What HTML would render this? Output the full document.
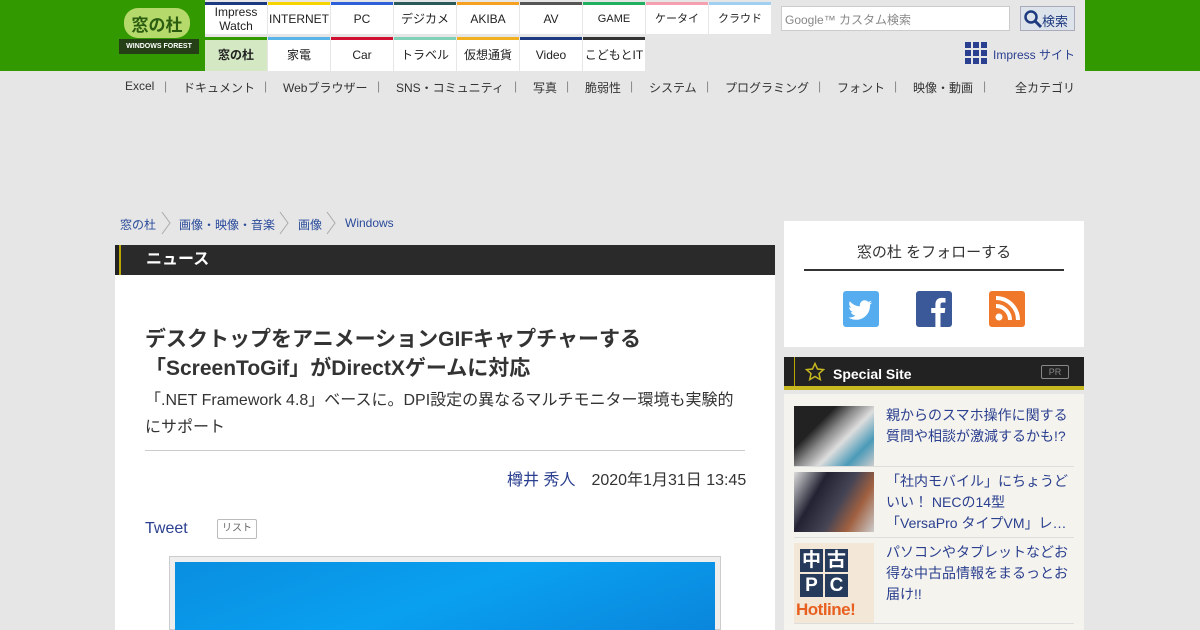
<!DOCTYPE html>
<html><head><meta charset="utf-8"><style>
*{margin:0;padding:0;box-sizing:border-box}
body{width:1200px;height:630px;overflow:hidden;background:#e6e6e6;font-family:"Liberation Sans","Noto Sans CJK JP",sans-serif;color:#333;position:relative}
.a{position:absolute}
.green{background:#339900}
.tile{position:absolute;width:62px;height:33px;background:#fff;font-size:12px;color:#222;text-align:center;display:flex;align-items:center;justify-content:center;line-height:1.1}
.cat{position:absolute;top:79px;font-size:12px;color:#333;white-space:nowrap}
.p{position:absolute;top:79px;font-size:12px;color:#888}
.bc{font-size:12px;color:#2a4b9b;position:absolute;top:216px}
.chev{position:absolute;top:211px}
</style></head><body>
<div class="a green" style="left:0;top:0;width:205px;height:71px"></div>
<div class="a green" style="left:1085px;top:0;width:115px;height:71px"></div>
<div class="a" style="left:205px;top:0;width:880px;height:71px;background:#e6e6e6"></div>
<div class="a" style="left:124px;top:8px;width:66px;height:30px;background:#b5d96a;border-radius:14px"></div>
<div class="a" style="left:124px;top:11px;width:66px;text-align:center;font-size:17px;font-weight:bold;color:#2a5d10">窓の杜</div>
<div class="a" style="left:119px;top:39px;width:80px;height:15px;background:#254016;color:#fff;font-size:7px;font-weight:bold;text-align:center;line-height:15px">WINDOWS FOREST</div>
<div class="tile" style="left:205px;top:2px;border-top:3px solid #1d3a80;height:32px">Impress<br>Watch</div>
<div class="tile" style="left:268px;top:2px;border-top:3px solid #f5d400;height:32px">INTERNET</div>
<div class="tile" style="left:331px;top:2px;border-top:3px solid #2f5fd8;height:32px">PC</div>
<div class="tile" style="left:394px;top:2px;border-top:3px solid #2a5a5a;height:32px">デジカメ</div>
<div class="tile" style="left:457px;top:2px;border-top:3px solid #f5a020;height:32px">AKIBA</div>
<div class="tile" style="left:520px;top:2px;border-top:3px solid #555;height:32px">AV</div>
<div class="tile" style="left:583px;top:2px;border-top:3px solid #20b060;height:32px;font-size:11px">GAME</div>
<div class="tile" style="left:646px;top:2px;border-top:3px solid #f5a0b0;height:32px;font-size:11px">ケータイ</div>
<div class="tile" style="left:709px;top:2px;border-top:3px solid #a0d0f0;height:32px;font-size:11px">クラウド</div>
<div class="tile" style="left:205px;top:37px;border-top:3px solid #339900;height:34px;background:#d4e8c4;font-weight:bold">窓の杜</div>
<div class="tile" style="left:268px;top:37px;border-top:3px solid #5ab4e8;height:34px">家電</div>
<div class="tile" style="left:331px;top:37px;border-top:3px solid #d01030;height:34px">Car</div>
<div class="tile" style="left:394px;top:37px;border-top:3px solid #80d0b8;height:34px">トラベル</div>
<div class="tile" style="left:457px;top:37px;border-top:3px solid #f0b020;height:34px">仮想通貨</div>
<div class="tile" style="left:520px;top:37px;border-top:3px solid #1d3a80;height:34px">Video</div>
<div class="tile" style="left:583px;top:37px;border-top:3px solid #333;height:34px">こどもとIT</div>
<div class="a" style="left:781px;top:6px;width:229px;height:25px;background:#fff;border:1px solid #ccc;font-size:12px;color:#888;padding:4px 3px">Google™ カスタム検索</div>
<div class="a" style="left:1020px;top:6px;width:55px;height:25px;background:#dde3ea;border:1px solid #aab"></div>
<svg class="a" style="left:1023px;top:9px" width="20" height="20"><circle cx="8" cy="8" r="5.5" stroke="#1d3a80" stroke-width="2.5" fill="none"/><path d="M12 12l6 6" stroke="#1d3a80" stroke-width="3"/></svg>
<div class="a" style="left:1042px;top:11px;font-size:13px;color:#1d3a80">検索</div>
<svg class="a" style="left:965px;top:42px" width="23" height="23"><g fill="#2a3f8f"><rect x="0" y="0" width="6" height="6"/><rect x="8" y="0" width="6" height="6"/><rect x="16" y="0" width="6" height="6"/><rect x="0" y="8" width="6" height="6"/><rect x="8" y="8" width="6" height="6"/><rect x="16" y="8" width="6" height="6"/><rect x="0" y="16" width="6" height="6"/><rect x="8" y="16" width="6" height="6"/><rect x="16" y="16" width="6" height="6"/></g></svg>
<div class="a" style="left:993px;top:46px;font-size:12px;color:#2a3f8f">Impress サイト</div>
<div class="cat" style="left:125px">Excel</div><div class="p" style="left:164px">|</div>
<div class="cat" style="left:183px">ドキュメント</div><div class="p" style="left:264px">|</div>
<div class="cat" style="left:283px">Webブラウザー</div><div class="p" style="left:377px">|</div>
<div class="cat" style="left:396px">SNS・コミュニティ</div><div class="p" style="left:514px">|</div>
<div class="cat" style="left:533px">写真</div><div class="p" style="left:566px">|</div>
<div class="cat" style="left:585px">脆弱性</div><div class="p" style="left:630px">|</div>
<div class="cat" style="left:649px">システム</div><div class="p" style="left:706px">|</div>
<div class="cat" style="left:725px">プログラミング</div><div class="p" style="left:818px">|</div>
<div class="cat" style="left:837px">フォント</div><div class="p" style="left:894px">|</div>
<div class="cat" style="left:913px">映像・動画</div><div class="p" style="left:983px">|</div>
<div class="cat" style="left:1015px">全カテゴリ</div>
<div class="bc" style="left:120px">窓の杜</div>
<svg class="chev" style="left:160px" width="12" height="24"><path d="M2 1l8 11-8 11" stroke="#aaa" fill="none"/></svg>
<div class="bc" style="left:179px">画像・映像・音楽</div>
<svg class="chev" style="left:278px" width="12" height="24"><path d="M2 1l8 11-8 11" stroke="#aaa" fill="none"/></svg>
<div class="bc" style="left:298px">画像</div>
<svg class="chev" style="left:325px" width="12" height="24"><path d="M2 1l8 11-8 11" stroke="#aaa" fill="none"/></svg>
<div class="bc" style="left:345px">Windows</div>
<div class="a" style="left:115px;top:245px;width:660px;height:30px;background:#2a2a2a;border-left:5px solid #222"></div>
<div class="a" style="left:119px;top:245px;width:2px;height:30px;background:#b8a800"></div>
<div class="a" style="left:146px;top:250px;color:#fff;font-size:16px;font-weight:bold;line-height:20px">ニュース</div>
<div class="a" style="left:115px;top:275px;width:660px;height:355px;background:#fff"></div>
<div class="a" style="left:145px;top:325px;width:620px;font-size:21px;font-weight:bold;line-height:29px;color:#333">デスクトップをアニメーションGIFキャプチャーする<br>「ScreenToGif」がDirectXゲームに対応</div>
<div class="a" style="left:145px;top:387px;width:600px;font-size:16px;line-height:27px;color:#333">「.NET Framework 4.8」ベースに。DPI設定の異なるマルチモニター環境も実験的にサポート</div>
<div class="a" style="left:145px;top:450px;width:600px;height:1px;background:#ccc"></div>
<div class="a" style="left:507px;top:466px;font-size:16px;color:#333"><span style="color:#2a3f8f">樽井 秀人</span>　2020年1月31日 13:45</div>
<div class="a" style="left:145px;top:520px;font-size:16px;color:#2a3f8f">Tweet</div>
<div class="a" style="left:217px;top:519px;width:40px;height:20px;border:1px solid #bbb;border-radius:2px;font-size:10px;color:#666;text-align:center;line-height:18px">リスト</div>
<div class="a" style="left:169px;top:556px;width:552px;height:74px;border:1px solid #ccc;background:#eee"></div>
<div class="a" style="left:175px;top:562px;width:540px;height:68px;background:linear-gradient(160deg,#0a8ee0,#0aa0f0 50%,#0a86dc)"></div>
<div class="a" style="left:784px;top:221px;width:300px;height:126px;background:#fff"></div>
<div class="a" style="left:784px;top:241px;width:300px;text-align:center;font-size:15px;color:#333">窓の杜 をフォローする</div>
<div class="a" style="left:804px;top:269px;width:260px;height:2px;background:#333"></div>
<svg class="a" style="left:843px;top:291px" width="36" height="36"><rect width="36" height="36" rx="3" fill="#55acee"/><path d="M29 11.5c-.9.4-1.8.6-2.8.8 1-.6 1.8-1.6 2.1-2.7-.9.6-2 1-3.1 1.2a4.9 4.9 0 0 0-8.3 4.5c-4-.2-7.6-2.1-10-5.1-1.3 2.3-.6 5.1 1.5 6.5-.8 0-1.5-.2-2.2-.6 0 2.4 1.7 4.4 3.9 4.9-.7.2-1.5.2-2.2.1.6 2 2.4 3.3 4.6 3.4A9.8 9.8 0 0 1 5.5 26.5 13.9 13.9 0 0 0 27 14.3c0-.2 0-.4 0-.6.8-.6 1.5-1.3 2-2.2z" fill="#fff"/></svg>
<svg class="a" style="left:916px;top:291px" width="36" height="36"><rect width="36" height="36" rx="3" fill="#3b5998"/><path d="M24.5 36V22h4.2l.6-5h-4.8v-3.1c0-1.4.4-2.4 2.4-2.4h2.6V7.1c-.4 0-2-.2-3.8-.2-3.7 0-6.3 2.3-6.3 6.5V17h-4.2v5h4.2v14z" fill="#fff"/></svg>
<svg class="a" style="left:989px;top:291px" width="36" height="36"><rect width="36" height="36" rx="3" fill="#f0782a"/><circle cx="10" cy="26" r="3.5" fill="#fff"/><path d="M7 15a14 14 0 0 1 14 14M7 7a22 22 0 0 1 22 22" stroke="#fff" stroke-width="4" fill="none"/></svg>
<div class="a" style="left:784px;top:357px;width:300px;height:33px;background:#222;border-bottom:4px solid #c8b820"></div>
<div class="a" style="left:794px;top:357px;width:1px;height:29px;background:#b8a800"></div>
<svg class="a" style="left:805px;top:362px" width="20" height="20"><path d="M10 1.5l2.5 5.5 6 .6-4.5 4 1.3 6L10 14.5 4.7 17.6 6 11.6 1.5 7.6l6-.6z" stroke="#c8b820" stroke-width="1.5" fill="none"/></svg>
<div class="a" style="left:833px;top:366px;font-size:14px;font-weight:bold;color:#fff">Special Site</div>
<div class="a" style="left:1041px;top:365px;width:28px;height:14px;border:1px solid #888;border-radius:2px;font-size:9px;color:#888;text-align:center;line-height:12px">PR</div>
<div class="a" style="left:784px;top:394px;width:300px;height:236px;background:#f5f3ee"></div>
<div class="a" style="left:794px;top:406px;width:80px;height:60px;background:linear-gradient(135deg,#222 30%,#888 45%,#ddd 60%,#4a9ab8 80%,#ccc)"></div>
<div class="a" style="left:886px;top:405px;width:190px;font-size:14px;line-height:21px;color:#2a3f8f">親からのスマホ操作に関する質問や相談が激減するかも!?</div>
<div class="a" style="left:794px;top:466px;width:280px;height:1px;background:#ddd"></div>
<div class="a" style="left:794px;top:472px;width:80px;height:60px;background:linear-gradient(120deg,#ddd,#223 30%,#445 55%,#a06040 75%,#ccc)"></div>
<div class="a" style="left:886px;top:471px;width:190px;font-size:14px;line-height:21px;color:#2a3f8f;height:63px;overflow:hidden">「社内モバイル」にちょうどいい！ NECの14型「VersaPro タイプVM」レ…</div>
<div class="a" style="left:794px;top:537px;width:280px;height:1px;background:#ddd"></div>
<div class="a" style="left:794px;top:543px;width:80px;height:80px;background:#f3e8d8"></div>
<div class="a" style="left:800px;top:549px;width:23px;height:23px;background:#263a5c;color:#fff;font-size:19px;font-weight:bold;text-align:center;line-height:23px">中</div>
<div class="a" style="left:825px;top:549px;width:23px;height:23px;background:#263a5c;color:#fff;font-size:19px;font-weight:bold;text-align:center;line-height:23px">古</div>
<div class="a" style="left:800px;top:574px;width:23px;height:23px;background:#263a5c;color:#fff;font-size:19px;font-weight:bold;text-align:center;line-height:23px">P</div>
<div class="a" style="left:825px;top:574px;width:23px;height:23px;background:#263a5c;color:#fff;font-size:19px;font-weight:bold;text-align:center;line-height:23px">C</div>
<div class="a" style="left:796px;top:600px;font-size:17px;font-weight:bold;color:#e86020;letter-spacing:-0.5px">Hotline!</div>
<div class="a" style="left:886px;top:542px;width:190px;font-size:14px;line-height:21px;color:#2a3f8f">パソコンやタブレットなどお得な中古品情報をまるっとお届け!!</div>
<div class="a" style="left:794px;top:623px;width:280px;height:1px;background:#ddd"></div>
</body></html>
